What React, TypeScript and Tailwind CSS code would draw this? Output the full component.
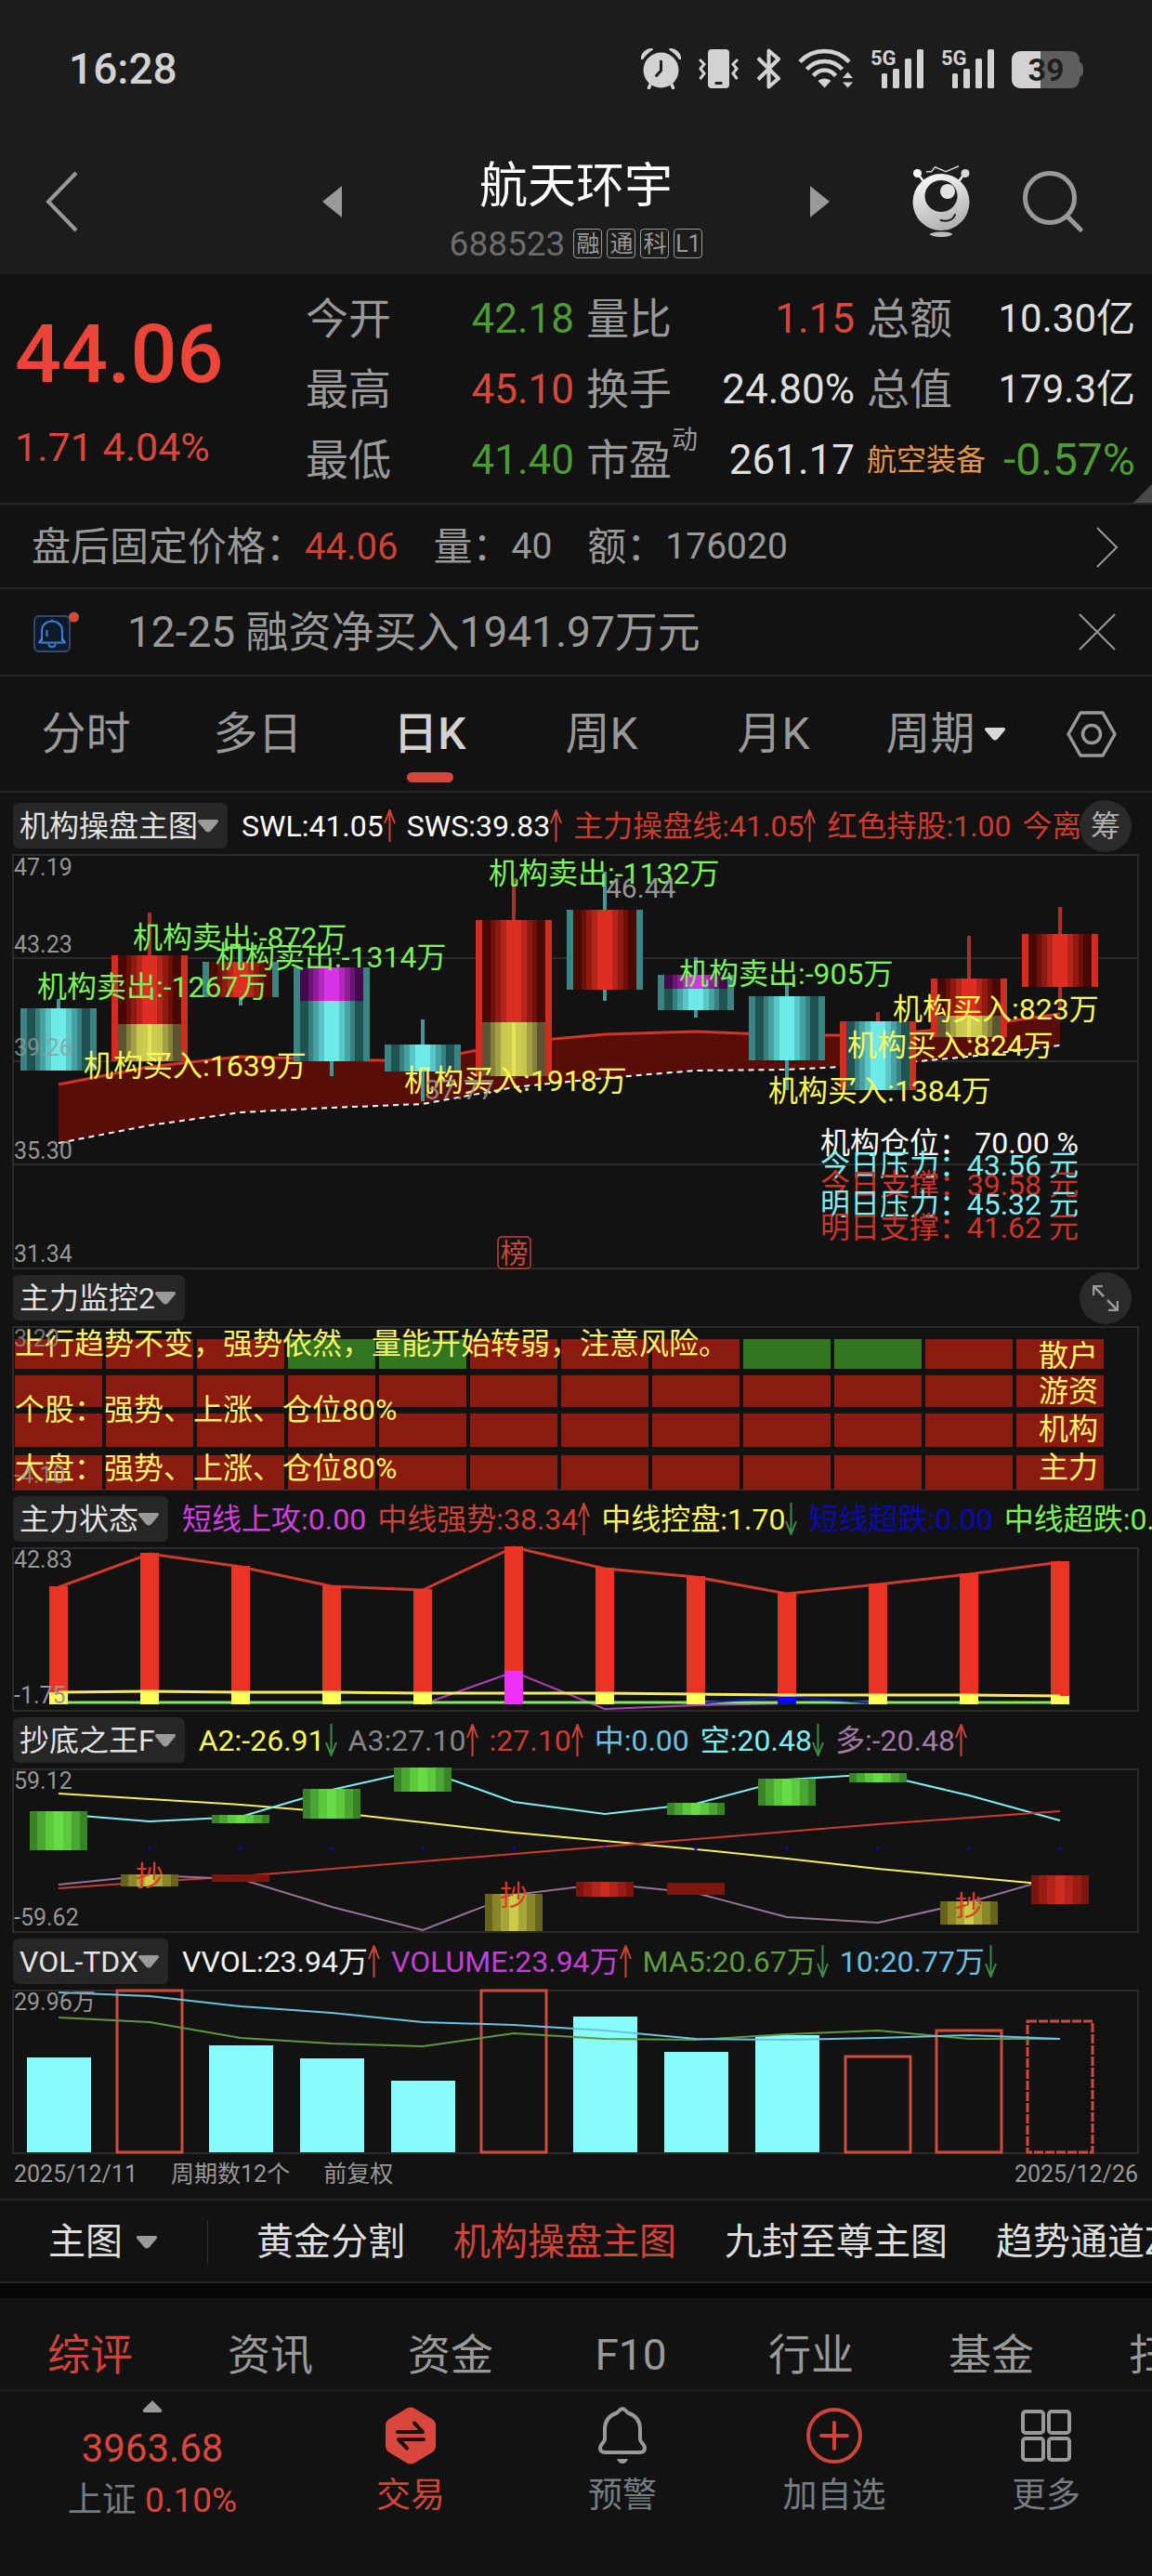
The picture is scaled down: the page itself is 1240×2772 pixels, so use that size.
import React from "react";

const LIGHT = "#d2d2d2";
const GREY = "#999999";

/* Horizontal centre of the nth trading day in every chart */
const cx = (i: number) => 63 + 98 * i;
const toPoints = (ys: number[]) => ys.map((y, i) => `${cx(i)},${y}`).join(" ");

/* ---------- status bar icons ---------- */

function AlarmIcon() {
  return (
    <svg width="43" height="44" viewBox="0 0 43 44" fill="none">
      <path d="M0 12C-1 6 5 0 11 0C12 0 13 .5 13 1.500C9 4 5 7.500 2 12Z" fill={LIGHT} />
      <path d="M43 12C44 6 38 0 32 0C31 0 30 .5 30 1.500C34 4 38 7.500 41 12Z" fill={LIGHT} />
      <path d="M10 39L8.500 42.500M33 39L34.500 42.500" stroke={LIGHT} strokeWidth="3.500" strokeLinecap="round" />
      <circle cx="21.500" cy="23.500" r="19" fill={LIGHT} />
      <path d="M21.500 14V24L16.500 29.500" stroke="#1c1c1c" strokeWidth="3" strokeLinecap="round" strokeLinejoin="round" />
    </svg>
  );
}

function VibrateIcon() {
  return (
    <svg width="43" height="44" viewBox="0 0 43 44" fill="none">
      <rect x="10" y="1" width="23" height="42" rx="4" fill={LIGHT} />
      <rect x="17.500" y="36" width="8" height="3" rx="1" fill="#1c1c1c" />
      <path d="M1 12L6 17L2 22L6 27L1.500 33M42 12L37 17L41 22L37 27L41.500 33" stroke={LIGHT} strokeWidth="3" />
    </svg>
  );
}

function BluetoothIcon() {
  return (
    <svg width="26" height="44" viewBox="0 0 26 44" fill="none">
      <path d="M2 10.500L24 32.500L13.500 41.500V2.500L24 11.500L2 33.500" stroke={LIGHT} strokeWidth="4" strokeLinejoin="round" />
    </svg>
  );
}

function WifiIcon() {
  return (
    <svg width="59" height="44" viewBox="0 0 59 44" fill="none">
      <path d="M2 14.500C16 -1 41 -1 55 14.500M9.500 22.500C19.500 11 37.500 11 47.500 22.500M16.500 29.500C23 21.500 34 21.500 40.500 29.500" stroke={LIGHT} strokeWidth="4.500" />
      <path d="M21.500 35C25 31.500 32 31.500 35.500 35L28.500 42.500Z" fill={LIGHT} />
      <path d="M53.500 25.500L59 32H48ZM53.500 42.500L59 36.500H48Z" fill={LIGHT} />
    </svg>
  );
}

function SignalIcon() {
  return (
    <svg width="57" height="44" viewBox="0 0 57 44" fill={LIGHT} className="overflow-visible">
      <text x="0" y="18" fontSize="22" fontWeight="700">5G</text>
      <rect x="12" y="27" width="6" height="16" rx="1.500" />
      <rect x="24" y="22" width="7" height="21" rx="1.500" />
      <rect x="37" y="11" width="7" height="32" rx="1.500" />
      <rect x="50" y="1" width="7" height="42" rx="1.500" />
    </svg>
  );
}

function BatteryIcon() {
  return (
    <svg width="77" height="44" viewBox="0 0 77 44" className="overflow-visible">
      <path d="M31 3H64a9 9 0 0 1 9 9V15C76 16 77 18 77 23S76 30 73 31V34a9 9 0 0 1 -9 9H31Z" fill="#5e5e5e" />
      <path d="M31 3H9a9 9 0 0 0 -9 9V34a9 9 0 0 0 9 9H31Z" fill={LIGHT} />
      <text x="37" y="35" textAnchor="middle" fontSize="34" fontWeight="700" fill="#1e1e1e">39</text>
    </svg>
  );
}

/* ---------- app icons ---------- */

function RobotIcon() {
  return (
    <svg width="62" height="78" viewBox="0 0 62 78" fill="none">
      <defs>
        <linearGradient id="robotBody" x1="0" y1="0" x2=".4" y2="1">
          <stop offset="0" stopColor="#ffffff" />
          <stop offset="1" stopColor="#b4b4b4" />
        </linearGradient>
      </defs>
      <path d="M5.500 8.500L12 17M56.500 8.500L50 17" stroke="#f0f0f0" strokeWidth="2.500" />
      <circle cx="5.500" cy="8.500" r="4.500" fill="#ffffff" />
      <circle cx="57" cy="8.500" r="4.500" fill="#d8d8d8" />
      <path d="M15 6.700H20.500L24.500 1.700L36 6.700L50 .7" stroke="#d0d0d0" strokeWidth="1.500" />
      <circle cx="31" cy="39.500" r="30.500" fill="url(#robotBody)" />
      <ellipse cx="31" cy="33" rx="17.500" ry="17" fill="#1c1c1c" />
      <circle cx="38" cy="28" r="8" fill="#e2e2e2" />
      <path d="M30.500 59C38 61 44 58.500 46 53" stroke="#1c1c1c" strokeWidth="2" strokeLinecap="round" />
      <path d="M18.500 74C22 70.500 40 70.500 43.500 74C40 78 22 78 18.500 74Z" fill="#bdbdbd" />
    </svg>
  );
}

function SearchIcon() {
  return (
    <svg width="66" height="66" viewBox="0 0 66 66" fill="none" stroke={GREY} strokeWidth="5">
      <circle cx="29" cy="29" r="26.500" />
      <path d="M48 49L62 63" strokeLinecap="round" />
    </svg>
  );
}

function NoticeIcon() {
  return (
    <svg width="50" height="46" viewBox="0 0 50 46" fill="none">
      <rect x="1" y="6" width="38" height="38" rx="5" fill="#0d1a2c" stroke="#35496a" strokeWidth="2" />
      <path d="M20 9.500V12M9 33V22C9 8 31 8 31 22V33M5.500 34.500H34.500M9 30L6 34.500M31 30L34 34.500M14.500 21V28" stroke="#3f7fd6" strokeWidth="2" />
      <path d="M16.500 35.500C16.500 40.500 23.500 40.500 23.500 35.500" stroke="#3f7fd6" strokeWidth="2" />
      <circle cx="43.500" cy="7" r="5.500" fill="#d5483a" />
    </svg>
  );
}

function HexSettingsIcon() {
  return (
    <svg width="54" height="50" viewBox="0 0 54 50" fill="none" stroke={GREY} strokeWidth="3.500" strokeLinejoin="round">
      <path d="M15 2H39L52 25L39 48H15L2 25Z" />
      <circle cx="27" cy="25" r="9.500" />
    </svg>
  );
}

function DownMark({ light = false }: { light?: boolean }) {
  return (
    <svg width="22" height="14" viewBox="0 0 22 14" fill={light ? "#d8d8d8" : "#9a9a9a"} className="shrink-0">
      <path d="M2 0H20C22 0 22.500 1.500 21.500 3L14 12Q11 15 8 12L.5 3C-.5 1.500 0 0 2 0Z" />
    </svg>
  );
}

function Arrow({ dir }: { dir: "up" | "down" }) {
  return dir === "up" ? (
    <svg width="13" height="35" viewBox="0 0 13 35" fill="none" stroke="#cf4437" strokeWidth="2" className="shrink-0">
      <path d="M6.500 35V1M1 15L6.500 1L12 15" />
    </svg>
  ) : (
    <svg width="13" height="35" viewBox="0 0 13 35" fill="none" stroke="#3f8a48" strokeWidth="2" className="shrink-0">
      <path d="M6.500 0V34M1 20L6.500 34L12 20" />
    </svg>
  );
}

/* ---------- quote header ---------- */

const quotes = [
  { label: "今开", value: "42.18", tone: "text-[#4c9c33]" },
  { label: "量比", value: "1.15", tone: "text-[#d9463a]" },
  { label: "总额", value: "10.30亿", tone: "text-[#e0e0e0]" },
  { label: "最高", value: "45.10", tone: "text-[#d9463a]" },
  { label: "换手", value: "24.80%", tone: "text-[#e0e0e0]" },
  { label: "总值", value: "179.3亿", tone: "text-[#e0e0e0]" },
  { label: "最低", value: "41.40", tone: "text-[#4c9c33]" },
  { label: "市盈", sup: "动", value: "261.17", tone: "text-[#e0e0e0]" },
  { label: "航空装备", sector: true, value: "-0.57%", tone: "text-[#4c9c33]" },
];

function QuoteCell({ q }: { q: (typeof quotes)[number] }) {
  const size = q.sector ? "text-[48px]" : q.value.endsWith("亿") ? "text-[42px]" : "text-[44px]";
  return (
    <div className="flex h-[76px] items-center justify-between">
      <dt className={q.sector ? "text-[32px] text-[#e3964a]" : "relative text-[46px] text-[#999999]"}>
        {q.label}
        {q.sup && <span className="absolute top-[-12px] left-full text-[28px]">{q.sup}</span>}
      </dt>
      <dd className={`${size} ${q.tone}`}>{q.value}</dd>
    </div>
  );
}

/* ---------- indicator panel header ---------- */

type Legend = { text: string; tone: string; dir?: "up" | "down" };

function PanelHeader({ name, legends = [], children }: { name: string; legends?: Legend[]; children?: React.ReactNode }) {
  return (
    <div className="my-[7px] flex h-[49px] items-center pl-[14px] text-[32px]">
      <button className="mr-[15px] flex h-full shrink-0 items-center rounded-md bg-[#262626] pr-[10px] pl-[7px] text-[#e2e2e2]">
        {name}
        <DownMark />
      </button>
      <ul className="flex h-full min-w-0 flex-1 items-center gap-3 overflow-hidden whitespace-nowrap">
        {legends.map((l) => (
          <li key={l.text} className={`flex shrink-0 items-center ${l.tone}`}>
            {l.text}
            {l.dir && <Arrow dir={l.dir} />}
          </li>
        ))}
      </ul>
      {children}
    </div>
  );
}

function Frame({ height }: { height: number }) {
  return <rect x="14" y="0" width="1211" height={height} fill="none" stroke="#2b2b2b" strokeWidth="2" />;
}

function AxisText({ y, children }: { y: number; children: string }) {
  return (
    <text x="15" y={y} fontSize="25" fill="#969696">
      {children}
    </text>
  );
}

/* ---------- candle chart ---------- */

const palettes = {
  cyan: ["#205252", "#388080", "#48a2a2", "#5ac6c6", "#6eeaea"],
  red: ["#4a0802", "#6e100a", "#8e1a12", "#b4241a", "#dc2e22"],
  yellow: ["#5a5632", "#85803c", "#a4a046", "#c8c850", "#cccc52"],
  purple: ["#46084c", "#6c1474", "#8e1e98", "#b428c0", "#d832e6"],
};
type Tone = keyof typeof palettes;

type Candle = { edge: "cyan" | "red"; wick: [number, number]; parts: [Tone, number, number][] };

const candles: Candle[] = [
  { edge: "cyan", wick: [155, 232], parts: [["cyan", 165, 232]] },
  { edge: "red", wick: [62, 222], parts: [["red", 108, 182], ["yellow", 182, 222]] },
  { edge: "cyan", wick: [99, 162], parts: [["red", 115, 153]] },
  { edge: "cyan", wick: [121, 238], parts: [["purple", 121, 157], ["cyan", 157, 222]] },
  { edge: "cyan", wick: [177, 265], parts: [["cyan", 204, 233]] },
  { edge: "red", wick: [25, 241], parts: [["red", 70, 180], ["yellow", 180, 238]] },
  { edge: "cyan", wick: [18, 157], parts: [["red", 59, 145]] },
  { edge: "cyan", wick: [110, 175], parts: [["purple", 129, 144], ["cyan", 144, 167]] },
  { edge: "cyan", wick: [138, 253], parts: [["cyan", 152, 221]] },
  { edge: "red", wick: [169, 253], parts: [["cyan", 179, 253]] },
  { edge: "red", wick: [87, 201], parts: [["red", 133, 173], ["yellow", 173, 196]] },
  { edge: "red", wick: [56, 167], parts: [["red", 85, 142]] },
];

const bodyHalf = [34, 25, 20, 14, 8];

function CandleShape({ c, x }: { c: Candle; x: number }) {
  const top = c.parts[0][1];
  const bottom = c.parts[c.parts.length - 1][2];
  return (
    <g>
      <rect x={x - 2} y={c.wick[0]} width="4" height={c.wick[1] - c.wick[0]} fill={c.edge === "cyan" ? "#4a9494" : "#a8302a"} />
      <rect x={x - 41} y={top} width="82" height={bottom - top} fill={c.edge === "cyan" ? "#3b8484" : "#d02c20"} />
      {c.parts.map(([tone, y0, y1]) => (
        <g key={tone}>
          {bodyHalf.map((h, k) => (
            <rect key={h} x={x - h} y={y0} width={h * 2} height={y1 - y0} fill={palettes[tone][k]} />
          ))}
          {tone === "yellow" && <rect x={x - 2} y={y0} width="4" height={y1 - y0} fill="#e4e458" />}
        </g>
      ))}
    </g>
  );
}

const shortLine = [247, 228, 217, 220, 222, 202, 193, 190, 194, 194, 185, 171];
const longLine = [310, 291, 277, 272, 268, 250, 240, 232, 231, 226, 217, 205];

const notes: [string, number, number, string][] = [
  ["机构卖出:-1267万", 40, 153, "#7cf25c"],
  ["机构卖出:-872万", 143, 100, "#7cf25c"],
  ["机构卖出:-1314万", 232, 121, "#7cf25c"],
  ["机构卖出:-1132万", 526, 31, "#7cf25c"],
  ["机构卖出:-905万", 731, 139, "#7cf25c"],
  ["机构买入:1639万", 90, 238, "#fbf95c"],
  ["机构买入:1918万", 435, 254, "#fbf95c"],
  ["机构买入:823万", 961, 177, "#fbf95c"],
  ["机构买入:824万", 912, 216, "#fbf95c"],
  ["机构买入:1384万", 827, 265, "#fbf95c"],
];

const levels: [string, string, number, string][] = [
  ["机构仓位：", "70.00 %", 321, "#ffffff"],
  ["今日压力：", "43.56 元", 345, "#7eeef0"],
  ["今日支撑：", "39.58 元", 366, "#cd3327"],
  ["明日压力：", "45.32 元", 387, "#7eeef0"],
  ["明日支撑：", "41.62 元", 412, "#cd3327"],
];

function MainChart() {
  const band = `${toPoints(shortLine)} ${longLine.map((y, i) => `${cx(i)},${y}`).reverse().join(" ")}`;
  return (
    <svg viewBox="0 0 1240 445" className="block w-full overflow-visible">
      <Frame height={445} />
      <path d="M14 111H1225M14 222H1225M14 333H1225" stroke="#2b2b2b" strokeWidth="2" />
      <polygon points={band} fill="#590d08" />
      <polyline points={toPoints(shortLine)} fill="none" stroke="#d23428" strokeWidth="3" />
      <polyline points={toPoints(longLine)} fill="none" stroke="#ffffff" strokeWidth="2" strokeDasharray="6 5" />
      {candles.map((c, i) => (
        <CandleShape key={i} c={c} x={cx(i)} />
      ))}
      <AxisText y={22}>47.19</AxisText>
      <AxisText y={105}>43.23</AxisText>
      <g opacity=".8">
        <AxisText y={216}>39.26</AxisText>
      </g>
      <AxisText y={327}>35.30</AxisText>
      <AxisText y={438}>31.34</AxisText>
      {notes.map(([t, x, y, fill]) => (
        <text key={t} x={x} y={y} fill={fill} fontSize="32">
          {t}
        </text>
      ))}
      <text x="652" y="46" fontSize="30" fill="#969696">46.44</text>
      <text x="457" y="263" fontSize="30" fill="#a09a9a" fillOpacity=".85">37.77</text>
      {levels.map(([t, v, y, fill]) => (
        <g key={t} fill={fill} fontSize="32">
          <text x="883" y={y}>{t}</text>
          <text x="1161" y={y} textAnchor="end">{v}</text>
        </g>
      ))}
      <rect x="536" y="411" width="35" height="34" rx="4" fill="#121212" stroke="#c5443a" strokeWidth="1.500" />
      <text x="553.500" y="439" textAnchor="middle" fontSize="30" fill="#c9463b">榜</text>
    </svg>
  );
}

/* ---------- monitor grid ---------- */

function MonitorChart() {
  const rows = [
    [13, 32],
    [52, 34],
    [93, 36],
    [138, 37],
  ];
  return (
    <svg viewBox="0 0 1240 175" className="block w-full overflow-visible">
      <Frame height={175} />
      {rows.map(([y, h], r) =>
        candles.map((_, i) => (
          <rect key={`${r}-${i}`} x={cx(i) - 47} y={y} width="94" height={h} fill={r === 0 && [3, 4, 8, 9].includes(i) ? "#33741f" : "#8b1a10"} />
        )),
      )}
      <g fontSize="32" fill="#f8f368">
        <text x="16" y="29">上行趋势不变，强势依然，量能开始转弱，注意风险。</text>
        <text x="16" y="100">个股：强势、上涨、仓位80%</text>
        <text x="16" y="163">大盘：强势、上涨、仓位80%</text>
        <text x="1118" y="42">散户</text>
        <text x="1118" y="80">游资</text>
        <text x="1118" y="121">机构</text>
        <text x="1118" y="162">主力</text>
      </g>
      <g opacity=".75">
        <AxisText y={21}>3.20</AxisText>
        <AxisText y={168}>-4.10</AxisText>
      </g>
    </svg>
  );
}

/* ---------- strength bars ---------- */

const strength = [41, 5, 19, 40, 44, -2, 21, 30, 48, 38, 27, 14];
const control = [155, 154, 155, 155, 156, 156, 156, 157, 158, 158, 158, 159];

function StrengthChart() {
  return (
    <svg viewBox="0 0 1240 175" className="block w-full overflow-visible">
      <Frame height={175} />
      <polyline points="455,168 553,133 651,173 749,169 847,167" fill="none" stroke="#b040b8" strokeWidth="2" />
      <path d="M63 166H1141" stroke="#84e860" strokeWidth="3" />
      <polyline points="749,167 847,160 945,167" fill="none" stroke="#1010d0" strokeWidth="2" />
      <polyline points={toPoints(strength.map((v) => v + 1))} fill="none" stroke="#cd3a2e" strokeWidth="3" />
      {strength.map((y, i) => (
        <rect key={i} x={cx(i) - 10} y={y} width="20" height={168 - y} fill="#ea3324" />
      ))}
      <polyline points={toPoints(control)} fill="none" stroke="#f4ee5c" strokeWidth="3" />
      {control.map((y, i) => {
        const special = i === 5 ? ["#ee30f8", 132] : i === 8 ? ["#0808f0", 160] : ["#ffff5a", y];
        return <rect key={i} x={cx(i) - 10} y={special[1]} width="20" height={168 - Number(special[1])} fill={String(special[0])} />;
      })}
      <AxisText y={21}>42.83</AxisText>
      <AxisText y={167}>-1.75</AxisText>
    </svg>
  );
}

/* ---------- bottom finder ---------- */

const boxTones = {
  green: ["#388426", "#4aa632", "#5cc83c", "#68dc46"],
  yellow: ["#66641a", "#888628", "#a8a636", "#cccc48"],
  red: ["#7c150d", "#981c14", "#b4241a", "#cc2c20"],
  flat: ["#7c150d", "#7c150d", "#7c150d", "#7c150d"],
};
const boxHalf = [31, 23, 14, 5];

const boxes: [number, number, number, keyof typeof boxTones][] = [
  [0, 45, 87, "green"],
  [2, 49, 58, "green"],
  [3, 21, 53, "green"],
  [4, -2, 24, "green"],
  [7, 36, 49, "green"],
  [8, 10, 39, "green"],
  [9, 4, 14, "green"],
  [1, 113, 126, "yellow"],
  [5, 134, 174, "yellow"],
  [10, 142, 167, "yellow"],
  [2, 113, 121, "flat"],
  [7, 122, 135, "flat"],
  [6, 121, 137, "red"],
  [11, 114, 145, "red"],
];

function BottomChart() {
  return (
    <svg viewBox="0 0 1240 175" className="block w-full overflow-visible">
      <Frame height={175} />
      <g fill="none" strokeWidth="2">
        <polyline points={toPoints([26, 32, 38, 46, 57, 68, 77, 86, 96, 107, 116, 125])} stroke="#f4ee5c" />
        <polyline points={toPoints([48, 56, 51, 22, 0, 35, 48, 37, 11, 5, 28, 55])} stroke="#7eeef0" />
        <polyline points={toPoints([128, 121, 115, 107, 99, 91, 83, 75, 67, 59, 52, 45])} stroke="#cd3a2e" />
        <polyline points={toPoints([124, 114, 118, 148, 173, 135, 123, 133, 159, 165, 143, 115])} stroke="#967298" />
      </g>
      {candles.slice(1).map((_, i) => (
        <circle key={i} cx={cx(i + 1)} cy="85" r="2" fill="#0c0ca0" />
      ))}
      {boxes.map(([i, y0, y1, tone]) => (
        <g key={`${i}-${y0}`}>
          {boxHalf.map((h, k) => (
            <rect key={h} x={cx(i) - h} y={y0} width={h * 2} height={y1 - y0} fill={boxTones[tone][k]} />
          ))}
        </g>
      ))}
      <g fontSize="30" fill="#dc3c28" textAnchor="middle">
        <text x={cx(1)} y="125">抄</text>
        <text x={cx(5)} y="146">抄</text>
        <text x={cx(10)} y="157">抄</text>
      </g>
      <AxisText y={21}>59.12</AxisText>
      <AxisText y={168}>-59.62</AxisText>
    </svg>
  );
}

/* ---------- volume ---------- */

const volumes: [number, "down" | "up" | "live"][] = [
  [72, "down"],
  [0, "up"],
  [59, "down"],
  [73, "down"],
  [97, "down"],
  [0, "up"],
  [28, "down"],
  [66, "down"],
  [48, "down"],
  [71, "up"],
  [43, "up"],
  [33, "live"],
];

function VolumeChart() {
  return (
    <svg viewBox="0 0 1240 175" className="block w-full overflow-visible">
      <Frame height={175} />
      {volumes.map(([y, kind], i) =>
        kind === "down" ? (
          <rect key={i} x={cx(i) - 34} y={y} width="69" height={174 - y} fill="#88fdfd" />
        ) : (
          <rect key={i} x={cx(i) - 35} y={y} width="70" height={174 - y} fill="none" stroke="#cf4a3c" strokeWidth="3" strokeDasharray={kind === "live" ? "10 2" : undefined} />
        ),
      )}
      <g fill="none" strokeWidth="2">
        <polyline points={toPoints([29, 34, 51, 57, 60, 46, 52, 53, 47, 43, 52, 52])} stroke="#5f9644" />
        <polyline points={toPoints([2, 6, 17, 24, 34, 37, 43, 52, 53, 51, 48, 52])} stroke="#6cc2e2" />
      </g>
      <AxisText y={21}>29.96万</AxisText>
    </svg>
  );
}

/* ---------- bottom bar icons ---------- */

function TradeIcon() {
  return (
    <svg width="56" height="62" viewBox="0 0 56 62">
      <path d="M24 1.500Q28 -.5 32 1.500L51 13Q55 15.500 55 20V42Q55 46.500 51 49L32 60.500Q28 62.500 24 60.500L5 49Q1 46.500 1 42V20Q1 15.500 5 13Z" fill="#d9463b" />
      <path d="M14 27H41L32 17.500M42 35H15L24 44.500" fill="none" stroke="#1a1010" strokeWidth="4" strokeLinecap="round" strokeLinejoin="round" />
    </svg>
  );
}

function BellIcon() {
  return (
    <svg width="56" height="62" viewBox="0 0 56 62" fill="none" stroke={GREY} strokeWidth="4" strokeLinejoin="round">
      <path d="M28 2C25 2 24.500 5 22 6.500C13 9.500 9 16 9 24V35C9 38 4 40 4 44Q4 49 9 49H47Q52 49 52 44C52 40 47 38 47 35V24C47 16 43 9.500 34 6.500C31.500 5 31 2 28 2Z" />
      <path d="M22 56H34Q32 61 28 61T22 56Z" fill={GREY} stroke="none" />
    </svg>
  );
}

function PlusIcon() {
  return (
    <svg width="60" height="62" viewBox="0 0 60 62" fill="none" stroke="#cf4439" strokeWidth="4">
      <circle cx="30" cy="31" r="28" />
      <path d="M30 17V45M16 31H44" strokeLinecap="round" />
    </svg>
  );
}

function MoreIcon() {
  return (
    <svg width="56" height="62" viewBox="0 0 56 62" fill="none" stroke={GREY} strokeWidth="4">
      <rect x="3" y="5" width="22" height="23" rx="3" />
      <rect x="31" y="5" width="22" height="23" rx="3" />
      <rect x="3" y="34" width="22" height="23" rx="3" />
      <rect x="31" y="34" width="22" height="23" rx="3" />
    </svg>
  );
}

const infoTabs = ["综评", "资讯", "资金", "F10", "行业", "基金", "扫雷"];

const actions = [
  { label: "交易", icon: <TradeIcon />, tone: "text-[#cf4439]" },
  { label: "预警", icon: <BellIcon />, tone: "text-[#747c82]" },
  { label: "加自选", icon: <PlusIcon />, tone: "text-[#747c82]" },
  { label: "更多", icon: <MoreIcon />, tone: "text-[#747c82]" },
];

export default function App() {
  return (
    <div className="min-h-screen overflow-hidden bg-[#121212] font-['Roboto','Noto_Sans_CJK_SC',sans-serif] leading-none text-[#999999]">
      <header className="bg-[#1c1c1c]">
        <div className="flex h-[148px] items-center justify-between px-[74px]">
          <time className="text-[46px] font-medium text-[#d2d2d2]">16:28</time>
          <div className="flex items-center gap-[19px]">
            <AlarmIcon />
            <VibrateIcon />
            <BluetoothIcon />
            <WifiIcon />
            <SignalIcon />
            <SignalIcon />
            <BatteryIcon />
          </div>
        </div>

        <div className="grid h-[147px] grid-cols-[347fr_546fr_347fr]">
          <div className="flex h-[138px] items-center pl-12">
            <button aria-label="返回">
              <svg width="36" height="66" viewBox="0 0 36 66" fill="none" stroke={GREY} strokeWidth="4">
                <path d="M34 2L4 33L34 64" />
              </svg>
            </button>
          </div>
          <div className="flex justify-between">
            <button aria-label="上一只" className="flex h-[138px] items-center">
              <svg width="21" height="34" viewBox="0 0 21 34" fill={GREY}>
                <path d="M21 0V34L0 17Z" />
              </svg>
            </button>
            <div className="flex flex-col items-center pt-[21px]">
              <h1 className="text-[52px] leading-[64px] text-white">航天环宇</h1>
              <div className="mt-[9px] flex h-10 items-center gap-[5px]">
                <span className="mr-1 text-[37px] text-[#6c6c6c]">688523</span>
                {["融", "通", "科", "L1"].map((t) => (
                  <span key={t} className="flex h-8 w-[31px] items-center justify-center rounded-sm border border-[#999999] text-[25px]">
                    {t}
                  </span>
                ))}
              </div>
            </div>
            <button aria-label="下一只" className="flex h-[138px] items-center">
              <svg width="21" height="34" viewBox="0 0 21 34" fill={GREY}>
                <path d="M0 0V34L21 17Z" />
              </svg>
            </button>
          </div>
          <div className="flex h-[138px] items-center justify-end gap-[57px] pr-[73px]">
            <button aria-label="智能助手">
              <RobotIcon />
            </button>
            <button aria-label="搜索">
              <SearchIcon />
            </button>
          </div>
        </div>
      </header>

      <section className="relative grid h-[248px] grid-cols-[300fr_893fr] gap-x-[13px] border-b-2 border-[#262626] pt-[10px] pr-[18px] pl-4">
        <div className="pt-[31px]">
          <p className="text-[88px] leading-[90px] font-medium text-[#ea4538]">44.06</p>
          <p className="mt-[31px] text-[43px] leading-[48px] whitespace-nowrap text-[#d9463a]">1.71 4.04%</p>
        </div>
        <dl className="grid grid-cols-3 content-start gap-x-[13px]">
          {quotes.map((q) => (
            <QuoteCell key={q.label} q={q} />
          ))}
        </dl>
        <svg width="20" height="20" viewBox="0 0 20 20" className="absolute right-0 bottom-0">
          <path d="M20 0V20H0Z" fill="#4a4a4a" />
        </svg>
      </section>

      <a href="#after-hours" className="flex h-[91px] items-center border-b-2 border-[#262626] pt-[2px] pr-9 pl-[34px] text-[42px] whitespace-nowrap">
        <span>盘后固定价格：</span>
        <span className="mr-[38px] text-[40px] text-[#cf4035]">44.06</span>
        <span>量：</span>
        <span className="mr-[38px] text-[39px]">40</span>
        <span>额：</span>
        <span className="text-[39px]">176020</span>
        <svg width="24" height="44" viewBox="0 0 24 44" fill="none" stroke={GREY} strokeWidth="2" className="ml-auto">
          <path d="M1 1L22 22L1 43" />
        </svg>
      </a>

      <div className="flex h-[94px] items-center border-b-2 border-[#262626] pr-[38px] pl-9 text-[46px] whitespace-nowrap">
        <NoticeIcon />
        <span className="ml-[51px]">12-25 融资净买入1941.97万元</span>
        <button aria-label="关闭" className="ml-auto">
          <svg width="42" height="42" viewBox="0 0 42 42" fill="none" stroke={GREY} strokeWidth="2">
            <path d="M2 2L40 40M40 2L2 40" />
          </svg>
        </button>
      </div>

      <nav className="grid h-[125px] grid-cols-[185fr_185fr_185fr_185fr_185fr_185fr_130fr] border-b-2 border-[#262626] text-[48px] whitespace-nowrap">
        {["分时", "多日", "日K", "周K", "月K"].map((t) => (
          <button key={t} className={t === "日K" ? "relative font-medium text-[#d2d2d2]" : "relative"}>
            {t}
            {t === "日K" && <span className="absolute bottom-[9px] left-1/2 h-[11px] w-[50px] -translate-x-1/2 rounded-full bg-[#d5453a]" />}
          </button>
        ))}
        <button className="flex items-center justify-center gap-[10px]">
          周期
          <DownMark light />
        </button>
        <button aria-label="设置" className="flex items-center justify-center">
          <HexSettingsIcon />
        </button>
      </nav>

      <main>
        <div className="pt-1">
          <PanelHeader
            name="机构操盘主图"
            legends={[
              { text: "SWL:41.05", tone: "text-white", dir: "up" },
              { text: "SWS:39.83", tone: "text-white", dir: "up" },
              { text: "主力操盘线:41.05", tone: "text-[#cd3a2e]", dir: "up" },
              { text: "红色持股:1.00", tone: "text-[#cd3a2e]" },
              { text: "今离", tone: "text-[#cd3a2e]" },
            ]}
          >
            <button className="mr-[22px] flex size-14 shrink-0 items-center justify-center rounded-full bg-[#2a2a2a] text-[32px] text-[#b0b0b0]">筹</button>
          </PanelHeader>
          <MainChart />
        </div>

        <PanelHeader name="主力监控2">
          <button aria-label="全屏" className="mr-[22px] flex size-14 shrink-0 items-center justify-center rounded-full bg-[#2a2a2a]">
            <svg width="28" height="28" viewBox="0 0 28 28" fill="none" stroke={GREY} strokeWidth="2.500">
              <path d="M1 11V1H11M1 1L12 12M27 17V27H17M27 27L16 16" />
            </svg>
          </button>
        </PanelHeader>
        <MonitorChart />

        <PanelHeader
          name="主力状态"
          legends={[
            { text: "短线上攻:0.00", tone: "text-[#d13fe0]" },
            { text: "中线强势:38.34", tone: "text-[#cd4033]", dir: "up" },
            { text: "中线控盘:1.70", tone: "text-[#fbf95c]", dir: "down" },
            { text: "短线超跌:0.00", tone: "text-[#0a0ab4]" },
            { text: "中线超跌:0.00", tone: "text-[#7cf25c]" },
          ]}
        />
        <StrengthChart />

        <PanelHeader
          name="抄底之王F"
          legends={[
            { text: "A2:-26.91", tone: "text-[#fbf95c]", dir: "down" },
            { text: "A3:27.10", tone: "text-[#868686]", dir: "up" },
            { text: ":27.10", tone: "text-[#cd3a2e]", dir: "up" },
            { text: "中:0.00", tone: "text-[#6cc0e2]" },
            { text: "空:20.48", tone: "text-[#7eeef0]", dir: "down" },
            { text: "多:-20.48", tone: "text-[#a07aa4]", dir: "up" },
          ]}
        />
        <BottomChart />

        <PanelHeader
          name="VOL-TDX"
          legends={[
            { text: "VVOL:23.94万", tone: "text-[#f4f4f4]", dir: "up" },
            { text: "VOLUME:23.94万", tone: "text-[#c440d4]", dir: "up" },
            { text: "MA5:20.67万", tone: "text-[#5f9c42]", dir: "down" },
            { text: "10:20.77万", tone: "text-[#6cc0e2]", dir: "down" },
          ]}
        />
        <VolumeChart />

        <div className="flex h-[51px] items-center gap-9 border-b-2 border-[#262626] px-[15px] pb-1 text-[25px]">
          <span>2025/12/11</span>
          <span>周期数12个</span>
          <span>前复权</span>
          <span className="ml-auto">2025/12/26</span>
        </div>
      </main>

      <div className="flex h-[89px] items-center gap-[52px] border-b-2 border-[#262626] pt-[2px] pl-[52px] text-[40px] whitespace-nowrap text-[#dedede]">
        <button className="flex shrink-0 items-center gap-[15px]">
          主图
          <DownMark />
        </button>
        <span className="ml-[2px] h-[46px] w-px shrink-0 bg-[#303030]" />
        <button className="shrink-0">黄金分割</button>
        <button className="shrink-0 text-[#cf4439]">机构操盘主图</button>
        <button className="shrink-0">九封至尊主图</button>
        <button className="shrink-0">趋势通道Z</button>
      </div>
      <div className="h-4 bg-[#070707]" />

      <nav className="flex h-[100px] border-b-2 border-[#1f1f1f] pt-6 text-[46px] whitespace-nowrap">
        {infoTabs.map((t, i) => (
          <a key={t} href={`#info-${i}`} className={i === 0 ? "flex w-[194px] shrink-0 items-center justify-center text-[#cf4439]" : "flex w-[194px] shrink-0 items-center justify-center"}>
            {t}
          </a>
        ))}
      </nav>

      <footer className="grid grid-cols-[328fr_228fr_228fr_228fr_228fr]">
        <button className="flex flex-col items-center pt-[10px]">
          <svg width="22" height="13" viewBox="0 0 22 13" fill="#9a9a9a">
            <path d="M11 0L21 10Q22 13 19 13H3Q0 13 1 10Z" />
          </svg>
          <span className="mt-[18px] text-[42px] leading-[42px] text-[#d9463a]">3963.68</span>
          <span className="mt-[15px] text-[37px] leading-[40px] whitespace-nowrap text-[#d9463a]">
            <span className="text-[#747c82]">上证</span> 0.10%
          </span>
        </button>
        {actions.map((a) => (
          <button key={a.label} className={`flex flex-col items-center pt-[17px] text-[37px] leading-[40px] ${a.tone}`}>
            {a.icon}
            <span className="mt-[14px]">{a.label}</span>
          </button>
        ))}
      </footer>
    </div>
  );
}
